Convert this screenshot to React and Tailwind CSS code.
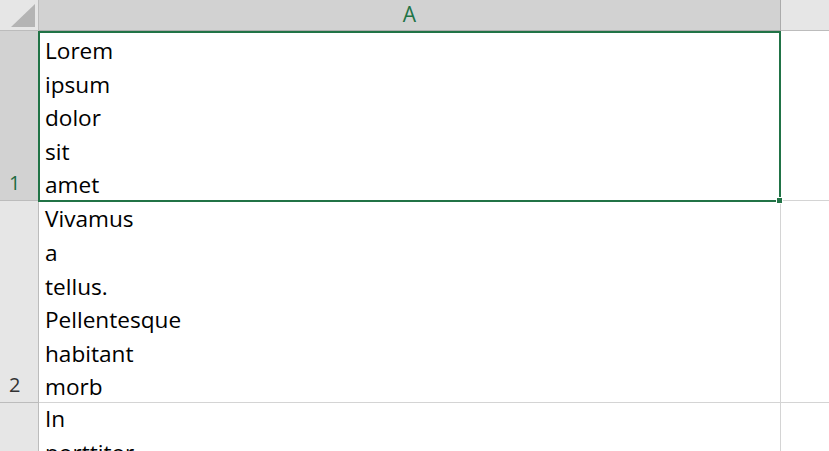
import React from 'react';

const font = { fontFamily: '"Open Sans", "Noto Sans", sans-serif' };

function CellText({ lines, align = 'end' }) {
  return (
    <div
      className={`relative flex h-full flex-col pl-[6px] text-[22.6px] leading-[33.6px] text-black ${
        align === 'end' ? 'top-[2px] justify-end' : '-top-[1px] justify-start'
      }`}
    >
      {lines.map((l, i) => (
        <div key={i} className="whitespace-nowrap">
          {l}
        </div>
      ))}
    </div>
  );
}

export default function App() {
  return (
    <div
      className="relative h-[451px] w-[829px] overflow-hidden bg-white"
      style={font}
    >
      <div className="grid h-full grid-cols-[39px_742px_48px] grid-rows-[31px_170px_202px_1fr]">
        {/* corner */}
        <div className="relative border-b border-r border-[#bcbcbc] bg-[#e6e6e6]">
          <svg className="absolute left-0 top-0" width="38" height="30">
            <polygon points="35,4 35,27 11,27" fill="#b4b4b4" />
          </svg>
        </div>
        {/* column headers */}
        <div className="flex items-center justify-center border-b border-r border-[#ababab] bg-[#d2d2d2] text-[21px] text-[#217346]">
          A
        </div>
        <div className="border-b border-[#bcbcbc] bg-[#e6e6e6]" />

        {/* row 1 */}
        <div className="flex items-end border-b border-r border-[#bcbcbc] bg-[#d2d2d2] pb-[2px] pl-[9px] text-[20px] text-[#1e6b41]">
          1
        </div>
        <div className="relative overflow-hidden border-b border-r border-[#d4d4d4]">
          <CellText lines={['Lorem', 'ipsum', 'dolor', 'sit', 'amet']} />
        </div>
        <div className="border-b border-[#d4d4d4]" />

        {/* row 2 */}
        <div className="flex items-end border-b border-r border-[#bcbcbc] bg-[#e6e6e6] pb-[2px] pl-[9px] text-[20px] text-[#333]">
          2
        </div>
        <div className="overflow-hidden border-b border-r border-[#d4d4d4]">
          <CellText
            lines={['Vivamus', 'a', 'tellus.', 'Pellentesque', 'habitant', 'morb']}
          />
        </div>
        <div className="border-b border-[#d4d4d4]" />

        {/* row 3 */}
        <div className="border-r border-[#bcbcbc] bg-[#e6e6e6]" />
        <div className="overflow-hidden border-r border-[#d4d4d4]">
          <CellText lines={['In', 'porttitor', 'dui']} align="start" />
        </div>
        <div />
      </div>
      {/* selection of A1 */}
      <div className="pointer-events-none absolute left-[38px] top-[31px] h-[171px] w-[743px] border-2 border-[#217346]">
        <div className="absolute -bottom-[4px] -right-[4px] h-[7px] w-[7px] border border-white bg-[#217346]" />
      </div>
    </div>
  );
}
